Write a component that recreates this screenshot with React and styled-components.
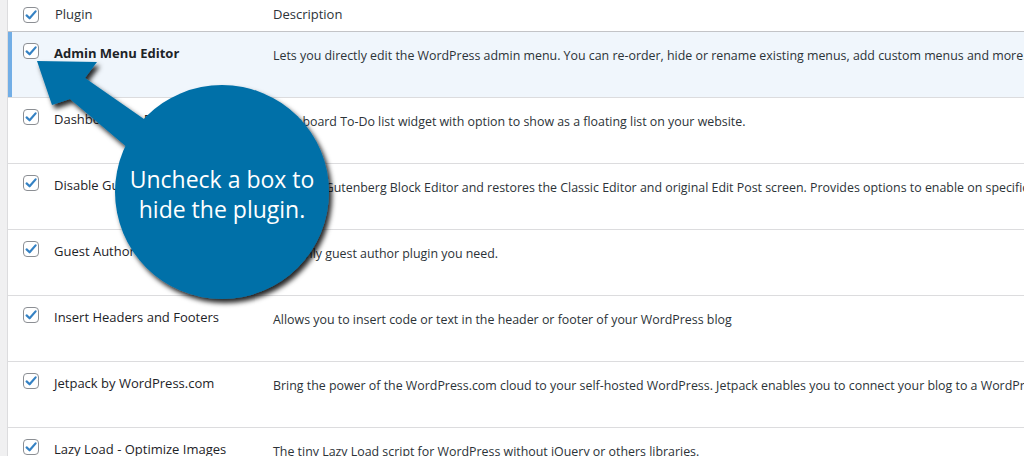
import React from "react";
import styled, { createGlobalStyle } from "styled-components";

const GlobalStyle = createGlobalStyle`
  html, body { margin: 0; padding: 0; background: #fff; }
  body {
    width: 1024px;
    height: 456px;
    overflow: hidden;
    font-family: "Open Sans", "Noto Sans", sans-serif;
    color: #1d2327;
  }
`;

const Page = styled.div`
  position: relative;
  display: flex;
  width: 1024px;
  height: 456px;
  overflow: hidden;
`;

const Gutter = styled.div`
  flex: 0 0 7px;
  background: #f0f0f1;
  border-right: 1px solid #dcdcde;
`;

const Table = styled.div`
  flex: 1 0 auto;
  display: flex;
  flex-direction: column;
`;

const Row = styled.div`
  flex: 0 0 auto;
  display: grid;
  grid-template-columns: 37px 218px max-content;
  height: ${(p) => (p.$header ? "31px" : "65px")};
  border-bottom: 1px solid ${(p) => (p.$header ? "#c3c4c7" : "#dcdcde")};
  background: ${(p) => (p.$active ? "#f0f6fc" : "#fff")};
  box-shadow: ${(p) => (p.$active ? "inset 4px 0 0 #72aee6" : "none")};
`;

const CheckCell = styled.div`
  padding: ${(p) => (p.$header ? "7px" : "11px")} 0 0 15px;
`;

const Box = styled.span`
  display: block;
  width: 14px;
  height: 14px;
  border: 1px solid #8c8f94;
  border-radius: 4px;
  background: #fff;
  svg { display: block; }
`;

const HeadCell = styled.div`
  padding: 5px 0 0 10px;
  font-size: 13px;
  line-height: 19px;
  color: #2c3338;
`;

const NameCell = styled.div`
  padding: 12px 0 0 9px;
  font-size: 13px;
  line-height: 19px;
  font-weight: ${(p) => (p.$bold ? 700 : 400)};
  color: #1d2327;
  white-space: nowrap;
`;

const DescCell = styled.div`
  padding: 14px 0 0 10px;
  font-size: 12.4px;
  line-height: 19px;
  color: #2c3338;
  white-space: nowrap;
`;

const Overlay = styled.div`
  position: absolute;
  inset: 0;
  pointer-events: none;
`;

const CalloutSvg = styled.svg`
  position: absolute;
  left: 0;
  top: 0;
`;

const CalloutText = styled.div`
  position: absolute;
  left: 115px;
  top: 164px;
  width: 214px;
  text-align: center;
  color: #fff;
  font-family: "Open Sans", "Noto Sans", sans-serif;
  font-size: 23px;
  line-height: 30px;
`;

const Checkbox = () => (
  <Box>
    <svg width="14" height="14" viewBox="0 0 14 14">
      <path d="M2.6 7.4 L5.6 10.3 L11.6 3.4" fill="none" stroke="#3582c4" strokeWidth="2.2" strokeLinecap="round" strokeLinejoin="round" />
    </svg>
  </Box>
);

const plugins = [
  {
    name: "Admin Menu Editor",
    desc: "Lets you directly edit the WordPress admin menu. You can re-order, hide or rename existing menus, add custom menus and more.",
    active: true,
  },
  {
    name: "Dashboard To-Do List",
    desc: "Dashboard To-Do list widget with option to show as a floating list on your website.",
  },
  {
    name: "Disable Gutenberg",
    desc: "Disables Gutenberg Block Editor and restores the Classic Editor and original Edit Post screen. Provides options to enable on specific post types, user roles, and more.",
  },
  {
    name: "Guest Author",
    desc: "The only guest author plugin you need.",
  },
  {
    name: "Insert Headers and Footers",
    desc: "Allows you to insert code or text in the header or footer of your WordPress blog",
  },
  {
    name: "Jetpack by WordPress.com",
    desc: "Bring the power of the WordPress.com cloud to your self-hosted WordPress. Jetpack enables you to connect your blog to a WordPress.com account to use the powerful features normally only available to WordPress.com users.",
  },
  {
    name: "Lazy Load - Optimize Images",
    desc: "The tiny Lazy Load script for WordPress without jQuery or others libraries.",
  },
];

export default function App() {
  return (
    <>
      <GlobalStyle />
      <Page>
        <Gutter />
        <Table>
          <Row $header>
            <CheckCell $header>
              <Checkbox />
            </CheckCell>
            <HeadCell>Plugin</HeadCell>
            <HeadCell>Description</HeadCell>
          </Row>
          {plugins.map((p) => (
            <Row key={p.name} $active={p.active}>
              <CheckCell>
                <Checkbox />
              </CheckCell>
              <NameCell $bold={p.active}>{p.name}</NameCell>
              <DescCell>{p.desc}</DescCell>
            </Row>
          ))}
        </Table>
        <Overlay>
          <CalloutSvg width="1024" height="456" viewBox="0 0 1024 456">
            <defs>
              <filter id="shadow" x="-20%" y="-20%" width="140%" height="140%">
                <feDropShadow dx="3" dy="4" stdDeviation="2.5" floodColor="#000" floodOpacity="0.85" />
              </filter>
            </defs>
            <g filter="url(#shadow)" fill="#0270a8">
              <path d="M37 61 L97 62 L85 78 L200 158 L180 192 L70 99 L52 105 Z" />
              <circle cx="222" cy="192" r="107" />
            </g>
          </CalloutSvg>
          <CalloutText>
            Uncheck a box to
            <br />
            hide the plugin.
          </CalloutText>
        </Overlay>
      </Page>
    </>
  );
}
